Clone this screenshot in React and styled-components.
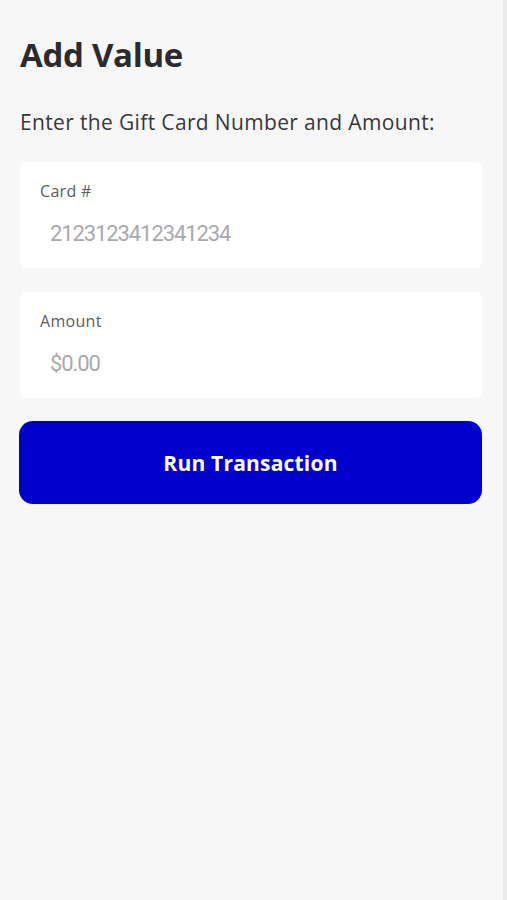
import React from "react";
import styled, { createGlobalStyle } from "styled-components";

const Global = createGlobalStyle`
  html, body { margin: 0; padding: 0; background: #f7f7f7; }
  body { font-family: "Open Sans", "Noto Sans", sans-serif; }
`;

const Page = styled.div`
  box-sizing: border-box;
  width: 507px;
  min-height: 900px;
  background: #f7f7f7;
  border-right: 4px solid #ebebeb;
  padding: 33px 21px 0 19px;
  display: flex;
  flex-direction: column;
`;

const Title = styled.h1`
  margin: 0 0 0 1px;
  font-family: "Open Sans", sans-serif;
  font-weight: 700;
  font-size: 33px;
  line-height: 44px;
  color: #2b2b2f;
  letter-spacing: -0.3px;
`;

const Subtitle = styled.p`
  margin: 31px 0 0 1px;
  font-family: "Open Sans", sans-serif;
  font-size: 21px;
  line-height: 28px;
  letter-spacing: 0.35px;
  color: #38383c;
`;

const Field = styled.div`
  margin-top: ${(p) => p.$top}px;
  margin-left: 1px;
  background: #ffffff;
  border-radius: 6px;
  height: 106px;
  box-sizing: border-box;
  padding: 18px 20px 0 20px;
  display: flex;
  flex-direction: column;
`;

const Label = styled.label`
  font-family: "Open Sans", sans-serif;
  font-size: 16px;
  line-height: 22px;
  letter-spacing: 0.3px;
  color: #5c5c62;
`;

const Value = styled.div`
  margin-top: 19px;
  padding-left: 10px;
  font-family: Roboto, sans-serif;
  font-size: 22px;
  line-height: 26px;
  letter-spacing: -1.1px;
  color: #a9a9ae;
`;

const Button = styled.button`
  margin-top: 23px;
  height: 83px;
  width: 100%;
  border: none;
  border-radius: 14px;
  background: #0000cc;
  color: #ffffff;
  font-family: "Open Sans", sans-serif;
  font-weight: 700;
  font-size: 21px;
  letter-spacing: 0.2px;
  cursor: pointer;
`;

export default function App() {
  return (
    <>
      <Global />
      <Page>
        <Title>Add Value</Title>
        <Subtitle>Enter the Gift Card Number and Amount:</Subtitle>
        <Field $top={26}>
          <Label>Card #</Label>
          <Value>2123123412341234</Value>
        </Field>
        <Field $top={24}>
          <Label>Amount</Label>
          <Value>$0.00</Value>
        </Field>
        <Button>Run Transaction</Button>
      </Page>
    </>
  );
}
